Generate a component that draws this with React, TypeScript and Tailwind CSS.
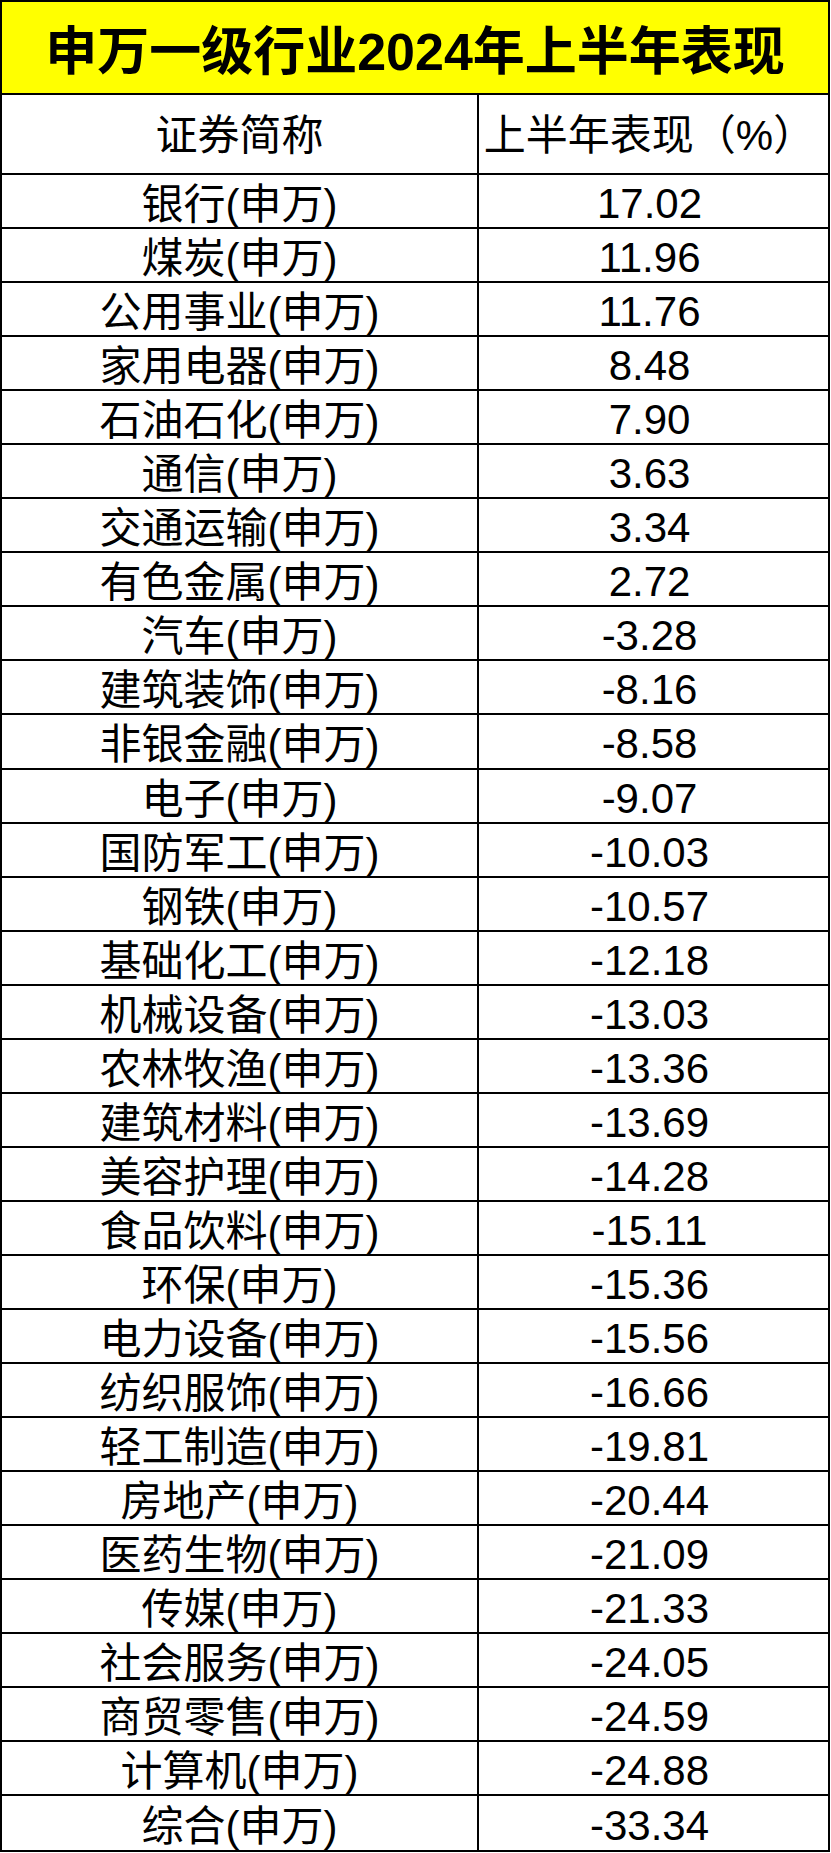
import React from 'react';

const rows: [string, string][] = [
    ["银行", "17.02"],
    ["煤炭", "11.96"],
    ["公用事业", "11.76"],
    ["家用电器", "8.48"],
    ["石油石化", "7.90"],
    ["通信", "3.63"],
    ["交通运输", "3.34"],
    ["有色金属", "2.72"],
    ["汽车", "-3.28"],
    ["建筑装饰", "-8.16"],
    ["非银金融", "-8.58"],
    ["电子", "-9.07"],
    ["国防军工", "-10.03"],
    ["钢铁", "-10.57"],
    ["基础化工", "-12.18"],
    ["机械设备", "-13.03"],
    ["农林牧渔", "-13.36"],
    ["建筑材料", "-13.69"],
    ["美容护理", "-14.28"],
    ["食品饮料", "-15.11"],
    ["环保", "-15.36"],
    ["电力设备", "-15.56"],
    ["纺织服饰", "-16.66"],
    ["轻工制造", "-19.81"],
    ["房地产", "-20.44"],
    ["医药生物", "-21.09"],
    ["传媒", "-21.33"],
    ["社会服务", "-24.05"],
    ["商贸零售", "-24.59"],
    ["计算机", "-24.88"],
    ["综合", "-33.34"],
];

const font = { fontFamily: '"Liberation Sans", "Noto Sans CJK SC", sans-serif' };

export default function App() {
    return (
        <div className="w-[830px] bg-white text-black" style={font}>
            <div className="border-2 border-black">
                {/* Title band */}
                <div className="h-[93px] bg-[#ffff00] border-b-2 border-black flex items-center justify-center pt-[8px]">
                    <h1 className="text-[52px] font-bold leading-none">申万一级行业2024年上半年表现</h1>
                </div>

                {/* Header */}
                <div className="grid grid-cols-[477px_1fr] h-[80px] border-b-2 border-black text-[42px] leading-none">
                    <div className="border-r-2 border-black flex items-center justify-center pt-[4px]">证券简称</div>
                    <div className="flex items-center justify-center pt-[4px] pr-[8px]">上半年表现（%）</div>
                </div>

                {/* Rows */}
                {rows.map(([name, value], i) => (
                    <div
                        key={name}
                        className={`grid grid-cols-[477px_1fr] h-[54.06px] text-[42px] leading-none ${i < rows.length - 1 ? 'border-b-2 border-black' : ''}`}
                    >
                        <div className="border-r-2 border-black flex items-center justify-center pt-[8px]">{name}(申万)</div>
                        <div className="flex items-center justify-center pt-[6px] pr-[8px]">{value}</div>
                    </div>
                ))}
            </div>
        </div>
    );
}
